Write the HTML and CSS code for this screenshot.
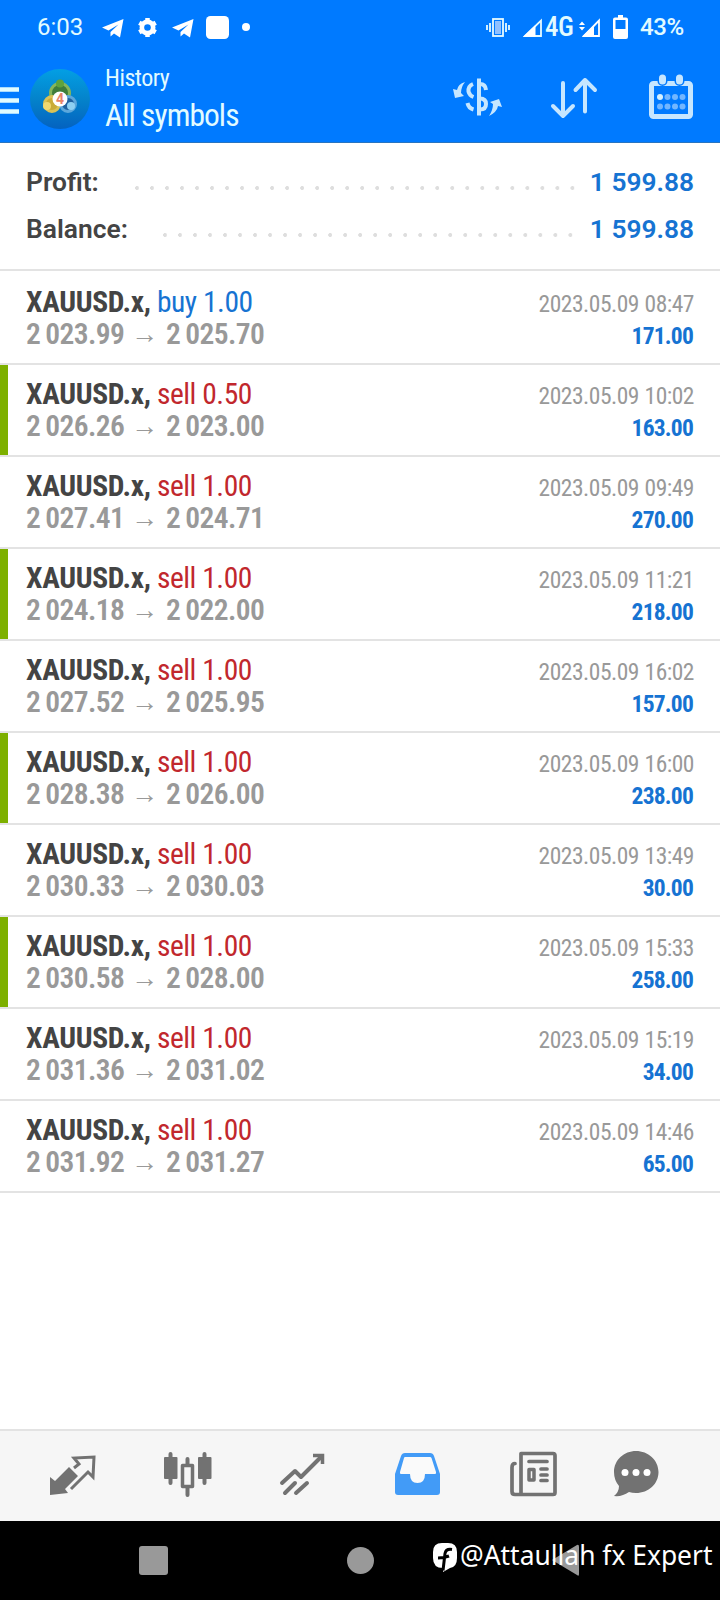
FILE: index.html
```
<!DOCTYPE html>
<html lang="en">
<head>
<meta charset="utf-8">
<title>History</title>
<link rel="stylesheet" href="styles.css">
</head>
<body>
<div class="screen">
  <header class="top">
    <div class="status">
      <span class="clock">6:03</span>
      <svg class="status-left" width="160" height="32" viewBox="98 10 160 32" fill="#fff">
        <path d="M102 26.500 123.500 18 120 36.500 114 32.500 110.500 35.500 110.500 31 118.500 23.500 108.500 29.500Z"/>
        <circle cx="147.500" cy="26.500" r="5.700" fill="none" stroke="#fff" stroke-width="4.600"/>
        <path d="M147.500 17v19M139.300 21.700l16.400 9.500M139.300 31.200l16.400-9.500" stroke="#fff" stroke-width="4.500"/>
        <circle cx="147.500" cy="26.500" r="3.300" fill="#007aff"/>
        <path d="M172 26.500 193.500 18 190 36.500 184 32.500 180.500 35.500 180.500 31 188.500 23.500 178.500 29.500Z"/>
        <rect x="206" y="15" width="23" height="23" rx="4.500"/>
        <circle cx="246" cy="26" r="4"/>
      </svg>
      <svg class="status-right" width="60" height="32" viewBox="484 10 60 32" fill="none" stroke="#e6fbff">
        <path d="M487 24v5M490 22v9M506 22v9M509 24v5" stroke-width="1.800"/>
        <rect x="493" y="18" width="10" height="17" stroke-width="1.800"/>
        <rect x="495" y="20" width="6" height="13" fill="#8fc0ff" stroke="none"/>
        <path d="M525 35 541 19.500v15.500Z" stroke-width="1.800"/><path d="M523 35.800 535.500 24v11.800Z" fill="#fff" stroke="none"/>
      </svg>
      <span class="network">4G</span>
      <svg class="signal" width="52" height="32" viewBox="578 10 52 32" fill="#fff">
        <path d="M580 24 583 20.500 586 24ZM580 26 583 29.500 586 26Z"/>
        <path d="M585 35 600 19.500v15.500Z" fill="none" stroke="#fff" stroke-width="1.800"/><path d="M583 35.500 595 24v11.500Z"/>
        <path d="M619 14h5v3h-5zM614 18.500q0-2 2-2h11q2 0 2 2V36q0 2-2 2h-11q-2 0-2-2Z"/><path fill="#007aff" d="M616.500 19h10v9h-10z"/>
      </svg>
      <span class="battery">43%</span>
    </div>
    <div class="bar">
      <svg class="brand" width="92" height="66" viewBox="0 64 92 66">
        <defs>
          <linearGradient id="sky" x1="0" y1="0" x2="0" y2="1"><stop offset="0" stop-color="#039fe4"/><stop offset=".5" stop-color="#0483cb"/><stop offset="1" stop-color="#0462c0"/></linearGradient>
        </defs>
        <path d="M0 88.500h19M0 99.500h19M0 110.500h19" stroke="#e0fbff" stroke-width="4.500"/>
        <circle cx="60" cy="98" r="30" fill="url(#sky)"/>
        <circle cx="60" cy="92" r="9.500" fill="#3f7d3a" stroke="#86b65a" stroke-width="3"/>
        <circle cx="52" cy="103" r="7.500" fill="#c9ac38" stroke="#d9c256" stroke-width="3"/>
        <circle cx="68" cy="103" r="7.500" fill="#20619f" stroke="#5ba7dc" stroke-width="3"/>
        <circle cx="60" cy="82.500" r="4" fill="#5fa33c"/>
        <circle cx="47" cy="105" r="4" fill="#f0d870"/>
        <circle cx="71" cy="105" r="4" fill="#8fd0f2"/>
        <circle cx="60" cy="98" r="7.500" fill="#fff"/>
        <text x="60" y="103" text-anchor="middle" class="brand-digit">4</text>
      </svg>
      <div class="heading"><div class="sub">History</div><div class="title">All symbols</div></div>
      <svg class="actions" width="260" height="56" viewBox="448 70 260 56" fill="none" stroke="#c6e6ff" stroke-linecap="round" stroke-linejoin="round">
        <path stroke-width="4" stroke-linecap="butt" d="M479 78.500v37"/>
        <path stroke-width="4" stroke-linecap="butt" d="M473 84q-5 2-4.500 7.500 1 4 5 5.500M467.500 103q1 5 6 6.500M480 84q5.500 0 6 6M480 98.500q6 0 6 5.500t-6 5.500"/>
        <path stroke="none" fill="#c6e6ff" d="M465 82q-7 2-8 8l-4-1 2 9 9-2-3-3q0-6 4-11ZM489 116q8-4 9-10l4 1-3-8-9 3 3 2q0 6-4 12Z"/>
        <path stroke-width="4" d="M563 83v33M553 106l10 10 10-10M585 111.500V80M575.500 90l9.500-10 10 10"/>
        <rect x="651.500" y="83.500" width="39" height="33" rx="2" stroke-width="5"/>
        <path stroke="#007aff" stroke-width="10" d="M662.500 77v4M679.500 77v4"/>
        <path stroke-width="7" d="M662.500 78v3M679.500 78v3"/>
        <g fill="#72b6ff" stroke="none"><circle cx="660" cy="97" r="3" fill="#d5f1ff"/><circle cx="667.500" cy="97" r="3"/><circle cx="675" cy="97" r="3"/><circle cx="682.500" cy="97" r="3"/><circle cx="660" cy="106.500" r="3"/><circle cx="667.500" cy="106.500" r="3"/><circle cx="675" cy="106.500" r="3"/><circle cx="682.500" cy="106.500" r="3"/></g>
      </svg>
    </div>
  </header>
  <section class="summary">
    <div class="total"><b class="label">Profit:</b><i class="dots dots-profit"></i><b class="amount">1 599.88</b></div>
    <div class="total"><b class="label">Balance:</b><i class="dots dots-balance"></i><b class="amount">1 599.88</b></div>
  </section>
  <main class="deals" id="deals"></main>
  <nav class="tabs">
    <svg width="720" height="90" viewBox="0 1431 720 90" fill="none" stroke="#727272" stroke-width="4" stroke-linecap="round" stroke-linejoin="round">
      <path fill="#727272" stroke="none" d="M50 1477l5 4 14-14 9 9-13 13 3 4-18 2Z"/>
      <path stroke-width="3" stroke-linecap="butt" stroke-linejoin="miter" d="M74 1468l5-4-5-6 20-1-1 20-5-5-17 17"/>
      <path d="M170.500 1454v29M204.500 1454v29M187.500 1459v36"/>
      <g fill="#727272" stroke="none"><rect x="164" y="1457" width="13.500" height="22" rx="1"/><rect x="198" y="1457" width="13.500" height="22" rx="1"/></g>
      <rect x="182.500" y="1465.500" width="10" height="21" fill="#f6f6f6" stroke-width="3.500"/>
      <path d="M282 1483l13-12 6 6 21-21M285 1493l10-10M296 1493l11-10"/><path stroke-width="3.500" stroke-linecap="butt" stroke-linejoin="miter" d="M313 1455.500h9.500v8.500"/>
      <path fill="#429bf7" stroke="none" d="M405 1453h25q3 0 4 3l6 18v18q0 3-3 3h-39q-3 0-3-3v-18l6-18q1-3 4-3Z"/>
      <path fill="#fafafa" stroke="none" d="M405 1457h25q1 0 1.500 1l4.500 14q.5 2-1 2h-10q0 9-7.500 9t-7.500-9h-9q-1.500 0-1-2l4-14q.3-1 1-1Z"/>
      <path stroke-width="3.700" d="M521 1453.500h32q2 0 2 2v37q0 2-2 2h-38q-3 0-3-3v-24q0-4 3-4M521 1453.500v41M529 1461.500h18M541 1469h6M541 1475h6M541 1480.500h6"/>
      <rect x="529" y="1469.500" width="5" height="10.500" stroke-width="3.500"/>
      <path fill="#727272" stroke="none" d="M636 1451c12 0 22.500 9 22.500 21s-10 21-22.500 21q-4 0-7-1-7 5-15 4 5-4 5-10-5-6-5-14c0-12 10-21 22-21Z"/>
      <g fill="#fff" stroke="none"><circle cx="625" cy="1472.500" r="3.500"/><circle cx="636" cy="1472.500" r="3.500"/><circle cx="647" cy="1472.500" r="3.500"/></g>
    </svg>
  </nav>
  <footer class="system">
    <svg width="720" height="79" viewBox="0 1521 720 79" fill="#999">
      <rect x="139" y="1546" width="29" height="29" rx="3"/><circle cx="360.500" cy="1560.500" r="13.500"/><path d="M552 1560 577 1545q2-1 2 2v27q0 3-2 1Z"/>
    </svg>
    <div class="credit">
      <svg width="26" height="30" viewBox="432 1542 26 30"><path fill="#fff" d="M442 1543h6q9 0 9 9v6q0 9-7 10l-7 4v-4q-10 0-10-10v-6q0-9 9-9Z"/><path d="M452 1549.500q-6-1-7 4l-2 17M438 1558q6 0 11-2" fill="none" stroke="#000" stroke-width="3"/></svg>
      <span class="handle">@Attaullah fx Expert</span>
    </div>
  </footer>
</div>
<script src="script.js"></script>
</body>
</html>
```
FILE: styles.css
```
body { margin: 0; }
.screen { width: 720px; height: 1600px; display: flex; flex-direction: column; background: #fff; font-family: Roboto, sans-serif; overflow: hidden; }
.screen svg { display: block; flex: none; }
.top { height: 143px; background: #007aff; border-bottom: 1px solid #2874c0; box-sizing: border-box; flex: none; color: #e2fbff; }
.status { height: 54px; display: flex; align-items: center; padding-left: 37px; font-size: 24px; }
.clock { width: 61px; line-height: 54px; font-weight: 450; font-stretch: 88%; }
.status-right { margin-left: 226px; }
.network { flex: none; width: 34px; padding-left: 1px; box-sizing: border-box; margin-right: -1px; font-size: 27px; font-weight: 500; font-stretch: 75%; letter-spacing: -.5px; }
.battery { margin-left: 11px; font-weight: 500; font-stretch: 88%; letter-spacing: -.4px; }
.bar { height: 87px; display: flex; align-items: center; }
.heading { width: 343px; margin-left: 13px; padding-top: 3px; font-stretch: 75%; white-space: nowrap; }
.sub { font-size: 24px; line-height: 32px; letter-spacing: -.5px; }
.title { font-size: 31.500px; line-height: 43px; letter-spacing: -.95px; }
.summary { height: 128px; box-sizing: border-box; padding: 15px 26px 0; border-bottom: 2px solid #e3e3e3; flex: none; }
.total { height: 47px; display: flex; align-items: center; justify-content: space-between; }
.label { color: #444; font-size: 26.400px; font-weight: 600; width: 109px; }
.amount { color: #1673d2; font-size: 26.300px; font-weight: 600; flex: 0 0 119px; text-align: right; }
.dots { height: 4px; margin-top: 12px; background: radial-gradient(circle at 2px 2px, #dedede 1.7px, transparent 2.2px) 0 0 / 15.03px 4px; }
.dots-profit { width: 440px; }
.dots-balance { width: 410px; margin-left: auto; margin-right: 2px; }
.deals { flex: 1; }
.deal { display: flex; justify-content: space-between; height: 92px; box-sizing: border-box; padding: 13px 26px 0; border-bottom: 2px solid #e3e3e3; font-stretch: 75%; }
.deal:first-child { height: 94px; padding-top: 15px; }
.deal.marked { background: linear-gradient(#7db000, #7db000) 0 0 / 8px 100% no-repeat; background-clip: padding-box; }
.right { text-align: right; }
.name, .prices { font-size: 29.500px; line-height: 32px; white-space: nowrap; }
.name { color: #444; letter-spacing: -.45px; }
.name b { letter-spacing: -.33px; }
.buy { color: #1673d2; }
.sell { color: #c1272d; }
.prices { display: flex; color: #999; font-weight: 600; letter-spacing: -.6px; word-spacing: -1.200px; }
.price { width: 97px; }
.arrow { width: 43px; text-align: center; font-size: 27px; letter-spacing: 0; }
.date { font-size: 23.500px; line-height: 36px; color: #999; letter-spacing: -.48px; word-spacing: .6px; }
.gain { font-size: 23.500px; line-height: 28px; color: #1673d2; font-weight: 700; letter-spacing: -.8px; padding-right: 1px; }
.tabs { height: 92px; flex: none; box-sizing: border-box; border-top: 2px solid #e3e3e3; background: #f6f6f6; }
.system { height: 79px; background: #000; position: relative; flex: none; }
.credit { position: absolute; left: 432px; top: 20px; display: flex; align-items: center; color: #fff; }
.handle { font-family: "Noto Sans", sans-serif; font-size: 26.400px; line-height: 28px; padding-bottom: 4px; white-space: nowrap; margin-left: 2px; }
.brand-digit { font: 700 14px Roboto, sans-serif; fill: #e98467; }
```
FILE: script.js
```
const deals = [
  ["buy", "1.00", "2 023.99", "2 025.70", "08:47", "171.00"],
  ["sell", "0.50", "2 026.26", "2 023.00", "10:02", "163.00"],
  ["sell", "1.00", "2 027.41", "2 024.71", "09:49", "270.00"],
  ["sell", "1.00", "2 024.18", "2 022.00", "11:21", "218.00"],
  ["sell", "1.00", "2 027.52", "2 025.95", "16:02", "157.00"],
  ["sell", "1.00", "2 028.38", "2 026.00", "16:00", "238.00"],
  ["sell", "1.00", "2 030.33", "2 030.03", "13:49", "30.00"],
  ["sell", "1.00", "2 030.58", "2 028.00", "15:33", "258.00"],
  ["sell", "1.00", "2 031.36", "2 031.02", "15:19", "34.00"],
  ["sell", "1.00", "2 031.92", "2 031.27", "14:46", "65.00"]
];
document.getElementById("deals").innerHTML = deals.map(([side, lots, from, to, time, gain], i) => `
  <article class="deal ${i % 2 && i < 8 ? "marked" : ""}">
    <div><div class="name"><b>XAUUSD.x,</b> <span class="${side}">${side} ${lots}</span></div><div class="prices"><span class="price">${from}</span><span class="arrow">→</span><span class="price">${to}</span></div></div>
    <div class="right"><div class="date">2023.05.09 ${time}</div><div class="gain">${gain}</div></div>
  </article>`).join("");
```
